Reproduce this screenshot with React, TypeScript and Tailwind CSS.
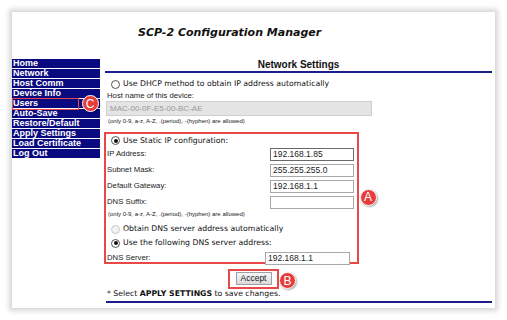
const NAV_ITEMS = [
  "Home",
  "Network",
  "Host Comm",
  "Device Info",
  "Users",
  "Auto-Save",
  "Restore/Default",
  "Apply Settings",
  "Load Certificate",
  "Log Out",
];

const verdana = "font-['DejaVu_Sans',Verdana,sans-serif]";
const arial = "font-['Liberation_Sans',Arial,sans-serif]";

function Radio({ checked = false, disabled = false }: { checked?: boolean; disabled?: boolean }) {
  return (
    <span
      className={`flex h-[9px] w-[9px] shrink-0 items-center justify-center rounded-full border ${
        disabled ? "border-[#c8c8c8] bg-[#f2f2f2]" : "border-[#555] bg-white"
      }`}
    >
      {checked ? <span className="h-[4px] w-[4px] rounded-full bg-[#111]" /> : null}
    </span>
  );
}

function Badge({ letter, className = "" }: { letter: string; className?: string }) {
  return (
    <span
      className={`flex h-[17px] w-[17px] items-center justify-center rounded-full border border-white bg-[#e63c3c] text-[12px] leading-none text-white shadow-[1px_1px_2px_rgba(0,0,0,0.35)] ${arial} ${className}`}
    >
      {letter}
    </span>
  );
}

function Field({ label, value, strong = false }: { label: string; value: string; strong?: boolean }) {
  return (
    <div className="flex h-[16px] items-center">
      <span className={`w-[164px] pl-[1px] text-[7.75px] text-[#222] ${arial}`}>{label}</span>
      <input
        readOnly
        value={value}
        className={`h-[13px] w-[84px] border bg-white px-[2px] text-[8.5px] text-[#222] outline-none ${arial} ${
          strong ? "border-[#6a6a6a]" : "border-[#a8a8a8]"
        }`}
      />
    </div>
  );
}

export default function App() {
  return (
    <div className="h-[320px] w-[507px] overflow-hidden bg-white pl-[12px] pt-[12px]">
      <div className="flex h-[296px] w-[483px] flex-col bg-white shadow-[0_0_5px_3px_rgba(0,0,0,0.16)]">
        <div className={`h-[47px] pl-[126px] pt-[15px] text-[11px] font-bold italic leading-[12px] text-[#111] ${verdana}`}>
          SCP-2 Configuration Manager
        </div>

        <div className="flex">
          <nav className="relative flex w-[88px] flex-col gap-px">
            {NAV_ITEMS.map((item) => (
              <div
                key={item}
                className={`h-[9px] bg-[#0a0a80] pl-[1px] text-[9px] font-bold leading-[9px] text-white ${arial}`}
              >
                {item}
              </div>
            ))}
            <span className="absolute left-0 top-[38.5px] h-[12px] w-[67px] border-[1.5px] border-[#e84848]" />
            <Badge letter="C" className="absolute left-[69.5px] top-[36px] h-[15px] w-[15px] text-[11px]" />
          </nav>

          <main className="ml-[5px] w-[387px] text-[#111]">
            <div className={`h-[12px] text-center text-[10px] font-bold leading-[12px] ${arial}`}>Network Settings</div>
            <div className="h-[2px] bg-[#1c1c8a]" />

            <div className={`mt-[5px] flex h-[12px] items-center gap-[3px] pl-[6px] text-[7.75px] ${verdana}`}>
              <Radio />
              Use DHCP method to obtain IP address automatically
            </div>
            <div className={`mt-[1px] h-[10px] pl-[2px] text-[7.75px] leading-[10px] text-[#222] ${arial}`}>
              Host name of this device:
            </div>
            <input
              readOnly
              value="MAC-00-0F-E5-00-BC-AE"
              className={`ml-[1px] block h-[15px] w-[266px] border border-[#cfcfcf] bg-[#e4e4e4] pl-[3px] text-[8px] text-[#9a9a9a] outline-none ${arial}`}
            />
            <div className={`h-[10px] pl-[3px] text-[6px] leading-[10px] text-[#222] ${arial}`}>
              (only 0-9, a-z, A-Z, .(period), -(hyphen) are allowed)
            </div>

            <div className="relative mt-[6px] -ml-[1px] h-[132px] w-[255px] border-2 border-[#e84848] pt-[1px]">
              <div className={`flex h-[11px] items-center gap-[3px] pl-[5px] text-[7.75px] ${verdana}`}>
                <Radio checked />
                Use Static IP configuration:
              </div>
              <Field label="IP Address:" value="192.168.1.85" strong />
              <Field label="Subnet Mask:" value="255.255.255.0" />
              <Field label="Default Gateway:" value="192.168.1.1" />
              <Field label="DNS Suffix:" value="" />
              <div className={`h-[8px] pl-[2px] text-[6px] leading-[8px] text-[#222] ${arial}`}>
                (only 0-9, a-z, A-Z, .(period), -(hyphen) are allowed)
              </div>
              <div className={`mt-[4px] flex h-[14px] items-center gap-[3px] pl-[5px] text-[7.75px] ${verdana}`}>
                <Radio disabled />
                Obtain DNS server address automatically
              </div>
              <div className={`flex h-[14px] items-center gap-[3px] pl-[5px] text-[7.75px] ${verdana}`}>
                <Radio checked />
                Use the following DNS server address:
              </div>
              <div className="flex h-[16px] items-center">
                <span className={`w-[159px] pl-[1px] text-[7.75px] text-[#222] ${arial}`}>DNS Server:</span>
                <input
                  readOnly
                  value="192.168.1.1"
                  className={`h-[13px] w-[85px] border border-[#a8a8a8] bg-white px-[2px] text-[8.5px] text-[#222] outline-none ${arial}`}
                />
              </div>
              <Badge letter="A" className="absolute left-[253.5px] top-[54.5px]" />
            </div>

            <div className="mt-[4px] flex items-center pl-[123px]">
              <div className="flex h-[20px] w-[51px] items-center justify-center border-2 border-[#e84848]">
                <button
                  type="button"
                  className={`h-[13px] w-[36px] border border-[#a0a0a0] bg-gradient-to-b from-[#f6f6f6] to-[#dadada] text-[8.5px] leading-none text-[#222] ${arial}`}
                >
                  Accept
                </button>
              </div>
              <Badge letter="B" className="mt-[4px]" />
            </div>

            <div className={`h-[10px] pl-[2px] text-[7.75px] leading-[10px] ${verdana}`}>
              * Select <b>APPLY SETTINGS</b> to save changes.
            </div>
            <div className="ml-[1px] mt-[1.5px] h-[2px] bg-[#1c1c8a]" />
          </main>
        </div>
      </div>
    </div>
  );
}
